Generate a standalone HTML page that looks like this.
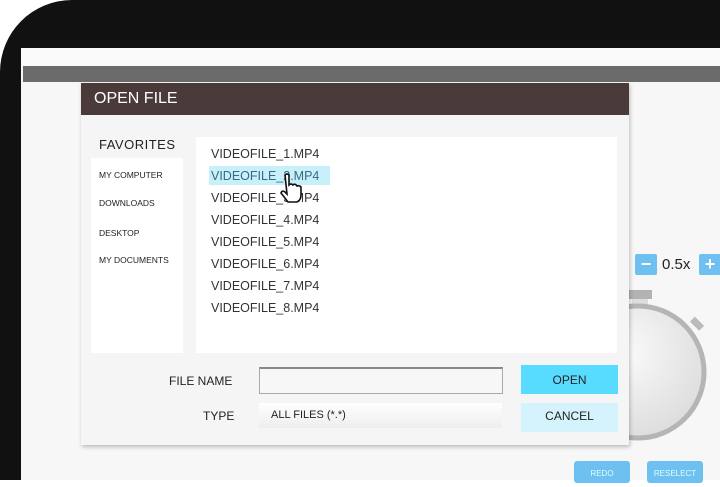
<!DOCTYPE html>
<html><head><style>
body{margin:0;width:720px;height:480px;overflow:hidden;background:#fff;font-family:"Liberation Sans",sans-serif;position:relative}
.a{position:absolute}
.t{color:#222;text-transform:uppercase;white-space:nowrap}
</style></head><body>
<div class="a" style="left:0;top:0;width:720px;height:480px;background:#111"></div>
<div class="a" style="left:0;top:0;width:90px;height:90px;background:#fff"></div>
<div class="a" style="left:0;top:0;width:720px;height:480px;background:#111;border-top-left-radius:72px"></div>
<div class="a" style="left:21px;top:48px;width:699px;height:432px;background:#f7f7f7"></div>
<div class="a" style="left:21px;top:48px;width:699px;height:17px;background:#fafafa"></div>
<div class="a" style="left:23px;top:66px;width:697px;height:16px;background:#6b6b6b"></div>
<svg class="a" style="left:560px;top:280px" width="160" height="170">
<defs><radialGradient id="g" cx="0.4" cy="0.35" r="0.7"><stop offset="0" stop-color="#fafafa"/><stop offset="1" stop-color="#dcdcdc"/></radialGradient></defs>
<rect x="68" y="10" width="24" height="9" fill="#b3b3b3"/>
<rect x="72" y="19" width="16" height="6" fill="#ddd"/>
<circle cx="78" cy="92" r="66" fill="url(#g)" stroke="#b5b5b5" stroke-width="5"/>
<rect x="131" y="40" width="13" height="7" fill="#bbb" transform="rotate(45 137 43)"/>
</svg>
<div class="a" style="left:635px;top:254px;width:22px;height:21px;background:#6ec0f0;border-radius:2px;color:#fff;font-weight:bold;font-size:18px;text-align:center;line-height:20px">−</div>
<div class="a t" style="left:662px;top:256px;font-size:15px;text-transform:none">0.5x</div>
<div class="a" style="left:699px;top:254px;width:22px;height:21px;background:#6ec0f0;border-radius:2px;color:#fff;font-weight:bold;font-size:18px;text-align:center;line-height:20px">+</div>
<div class="a" style="left:574px;top:461px;width:56px;height:22px;background:#6ec0f0;border-radius:3px;color:#dff;font-size:8px;text-align:center;line-height:26px">REDO</div>
<div class="a" style="left:647px;top:461px;width:56px;height:22px;background:#6ec0f0;border-radius:3px;color:#dff;font-size:8px;text-align:center;line-height:26px">RESELECT</div>
<div class="a" style="left:81px;top:83px;width:548px;height:362px;background:#f5f5f5;box-shadow:1px 2px 4px rgba(0,0,0,.25)"></div>
<div class="a" style="left:81px;top:83px;width:548px;height:32px;background:#4a3a3a"></div>
<div class="a t" style="left:94px;top:90px;font-size:16px;color:#fff">Open File</div>
<div class="a t" style="left:99px;top:137px;font-size:13px;letter-spacing:.5px">Favorites</div>
<div class="a" style="left:91px;top:158px;width:92px;height:195px;background:#fff"></div>
<div class="a t" style="left:99px;top:170px;font-size:8.5px">My Computer</div>
<div class="a t" style="left:99px;top:198px;font-size:8.5px">Downloads</div>
<div class="a t" style="left:99px;top:228px;font-size:8.5px">Desktop</div>
<div class="a t" style="left:99px;top:255px;font-size:8.5px">My Documents</div>
<div class="a" style="left:196px;top:137px;width:421px;height:216px;background:#fff"></div>
<div class="a" style="left:209px;top:166px;width:121px;height:19px;background:#c8f0fa"></div>
<div class="a t" style="left:211px;top:143px;font-size:12.5px;line-height:22px;color:#333">VIDEOFILE_1.MP4<br><span style="color:#3a6a80">VIDEOFILE_2.MP4</span><br>VIDEOFILE_3.MP4<br>VIDEOFILE_4.MP4<br>VIDEOFILE_5.MP4<br>VIDEOFILE_6.MP4<br>VIDEOFILE_7.MP4<br>VIDEOFILE_8.MP4</div>
<svg class="a" style="left:278px;top:173px" width="26" height="30"><path d="M7 2 q2-2 4 0 v10 q2-2 4 0 q2-2 4 1 q2-1 4 1 v8 q0 5-4 7 h-9 l-7-9 q1-3 4-1 l2 2 z" fill="#fff" stroke="#111" stroke-width="1.6"/></svg>
<div class="a t" style="left:169px;top:374px;font-size:12px">File Name</div>
<div class="a" style="left:259px;top:367px;width:242px;height:24px;background:#f7f7f7;border:1px solid #aaa;border-top:2px solid #888"></div>
<div class="a t" style="left:203px;top:409px;font-size:12px">Type</div>
<div class="a" style="left:259px;top:403px;width:243px;height:25px;background:linear-gradient(#fff,#eee)"></div>
<div class="a t" style="left:271px;top:409px;font-size:11px">All Files (*.*)</div>
<div class="a" style="left:521px;top:365px;width:97px;height:29px;background:#57dcff;text-align:center;line-height:31px;font-size:12px;color:#222">OPEN</div>
<div class="a" style="left:521px;top:403px;width:97px;height:29px;background:#d5f3fc;text-align:center;line-height:27px;font-size:12px;color:#222">CANCEL</div>
</body></html>
